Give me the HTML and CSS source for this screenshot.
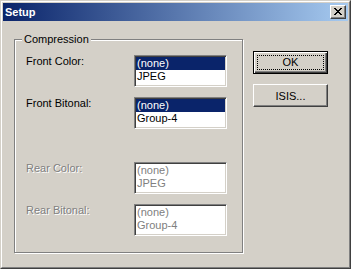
FILE: index.html
```html
<!DOCTYPE html>
<html lang="en">
  <head>
    <meta charset="UTF-8" />
    <title>Setup</title>
    <link rel="stylesheet" href="styles.css">
  </head>
  <body>
    <div class="window">
      <div class="frame">
        <div class="titlebar">
          <span class="title">Setup</span>
          <button class="close-btn" aria-label="Close">
            <svg width="8" height="7" viewBox="0 0 8 7">
              <path d="M0 0h2v1h-2zM6 0h2v1h-2zM1 1h2v1h-2zM5 1h2v1h-2zM2 2h4v1h-4zM3 3h2v1h-2zM2 4h4v1h-4zM1 5h2v1h-2zM5 5h2v1h-2zM0 6h2v1h-2zM6 6h2v1h-2z" fill="#000"/>
            </svg>
          </button>
        </div>
        <div class="client">
          <div class="group">
            <span class="legend">Compression</span>
            <div class="row">
              <span class="label">Front Color:</span>
              <ul class="listbox">
                <li class="selected">(none)</li>
                <li>JPEG</li>
              </ul>
            </div>
            <div class="row">
              <span class="label">Front Bitonal:</span>
              <ul class="listbox">
                <li class="selected">(none)</li>
                <li>Group-4</li>
              </ul>
            </div>
            <div class="row disabled spaced">
              <span class="label">Rear Color:</span>
              <ul class="listbox">
                <li>(none)</li>
                <li>JPEG</li>
              </ul>
            </div>
            <div class="row disabled">
              <span class="label">Rear Bitonal:</span>
              <ul class="listbox">
                <li>(none)</li>
                <li>Group-4</li>
              </ul>
            </div>
          </div>
          <div class="buttons">
            <button class="btn default"><span class="focus">OK</span></button>
            <button class="btn">ISIS...</button>
          </div>
        </div>
      </div>
    </div>
  </body>
</html>
```

FILE: styles.css
```css
* {
  box-sizing: border-box;
  margin: 0;
  padding: 0;
}

body {
  font-family: "Liberation Sans", Arial, sans-serif;
  font-size: 11px;
  line-height: 13px;
  color: #000;
  background-color: #d4d0c8;
}

.window {
  width: 351px;
  height: 269px;
  border: 1px solid;
  border-color: #d4d0c8 #404040 #404040 #d4d0c8;
}

.frame {
  height: 100%;
  border: 1px solid;
  border-color: #fff #808080 #808080 #fff;
  padding: 1px;
  background-color: #d4d0c8;
}

.titlebar {
  height: 18px;
  display: flex;
  align-items: center;
  justify-content: space-between;
  padding: 0 2px 0 2px;
  background: linear-gradient(to right, #0a246a, #a6caf0);
}

.title {
  color: #fff;
  font-weight: bold;
  font-size: 11px;
}

.close-btn {
  width: 16px;
  height: 14px;
  display: flex;
  align-items: center;
  justify-content: center;
  background-color: #d4d0c8;
  border: 1px solid;
  border-color: #fff #404040 #404040 #fff;
  box-shadow: inset -1px -1px #808080;
  padding: 0 0 1px 0;
}

.client {
  display: flex;
  padding: 18px 0 0 11px;
}

.group {
  position: relative;
  width: 229px;
  height: 214px;
  border: 1px solid #808080;
  box-shadow: inset 1px 1px #fff, 1px 1px #fff;
  padding: 15px 0 0 11px;
}

.legend {
  position: absolute;
  top: -7px;
  left: 7px;
  padding: 0 2px;
  background-color: #d4d0c8;
}

.row {
  display: flex;
  margin-bottom: 10px;
}

.row.spaced {
  margin-top: 33px;
}

.label {
  width: 108px;
}

.listbox {
  list-style: none;
  width: 93px;
  height: 32px;
  background-color: #fff;
  border: 1px solid;
  border-color: #808080 #fff #fff #808080;
  box-shadow: inset 1px 1px #404040, inset -1px -1px #d4d0c8;
  padding: 1px;
}

.listbox li {
  height: 13px;
  padding-left: 1px;
}

.listbox li.selected {
  background-color: #0a246a;
  color: #fff;
}

.disabled .label {
  color: #808080;
  text-shadow: 1px 1px 0 #fff;
}

.disabled .listbox li {
  color: #808080;
}

.buttons {
  display: flex;
  flex-direction: column;
  gap: 10px;
  margin: 12px 0 0 10px;
}

.btn {
  width: 75px;
  height: 23px;
  font-family: "Liberation Sans", Arial, sans-serif;
  font-size: 11px;
  color: #000;
  background-color: #d4d0c8;
  border: 1px solid;
  border-color: #fff #404040 #404040 #fff;
  box-shadow: inset -1px -1px #808080;
}

.btn.default {
  border: 1px solid #000;
  box-shadow: inset 1px 1px #fff, inset -1px -1px #404040, inset -2px -2px #808080;
  padding: 3px;
}

.focus {
  display: block;
  height: 100%;
  border: 1px dotted #000;
  line-height: 13px;
}
```
